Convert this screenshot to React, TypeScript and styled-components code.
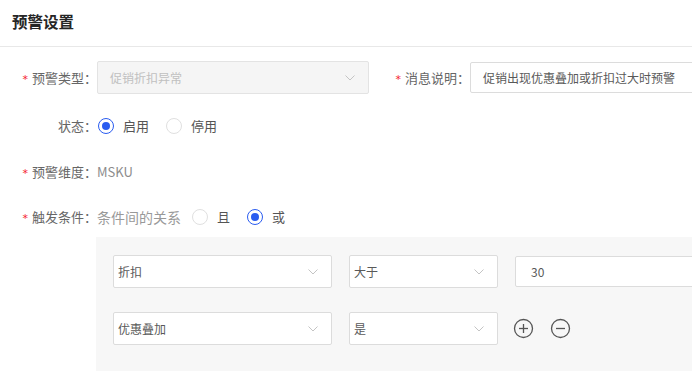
import React from 'react';
import styled, { createGlobalStyle } from 'styled-components';

const GlobalStyle = createGlobalStyle`
  html, body {
    margin: 0;
    padding: 0;
    background: #fff;
    overflow: hidden;
  }
  body {
    font-family: "Noto Sans CJK SC", "Noto Sans", sans-serif;
    color: #595959;
  }
`;

function Chevron() {
  return (
    <ChevronIcon width="12" height="8" viewBox="0 0 12 8">
      <path d="M1.5 1.5 L6 6 L10.5 1.5" fill="none" stroke="#c4c4c4" strokeWidth="1" />
    </ChevronIcon>
  );
}

function CircleIcon({ plus }: { plus?: boolean }) {
  return (
    <svg width="21" height="21" viewBox="0 0 21 21">
      <circle cx="10.5" cy="10.5" r="9" fill="none" stroke="#555" strokeWidth="1.3" />
      <path d="M6 10.5 H15" stroke="#555" strokeWidth="1.3" />
      {plus && <path d="M10.5 6 V15" stroke="#555" strokeWidth="1.3" />}
    </svg>
  );
}

function Radio({ checked, label }: { checked?: boolean; label: string }) {
  return (
    <RadioItem>
      <RadioDot $checked={checked} />
      <span>{label}</span>
    </RadioItem>
  );
}

export default function App() {
  return (
    <Page>
      <GlobalStyle />
      <Header>预警设置</Header>
      <Form>
        <Row>
          <Label $required>预警类型：</Label>
          <Select $width={272} $disabled>
            <SelectText $disabled>促销折扣异常</SelectText>
            <Chevron />
          </Select>
          <Label $required $width={101}>消息说明：</Label>
          <Input $width={240}>促销出现优惠叠加或折扣过大时预警</Input>
        </Row>
        <Row>
          <Label>状态：</Label>
          <RadioGroup>
            <Radio checked label="启用" />
            <Radio label="停用" />
          </RadioGroup>
        </Row>
        <Row>
          <Label $required>预警维度：</Label>
          <Value>MSKU</Value>
        </Row>
        <Row>
          <Label $required>触发条件：</Label>
          <Hint>条件间的关系</Hint>
          <RadioGroup>
            <Radio label="且" />
            <Radio checked label="或" />
          </RadioGroup>
        </Row>
        <ConditionBox>
          <ConditionRow>
            <Select $width={219}>
              <SelectText>折扣</SelectText>
              <Chevron />
            </Select>
            <Select $width={149}>
              <SelectText>大于</SelectText>
              <Chevron />
            </Select>
            <Input $width={200} $pad={15}>30</Input>
          </ConditionRow>
          <ConditionRow>
            <Select $width={219}>
              <SelectText>优惠叠加</SelectText>
              <Chevron />
            </Select>
            <Select $width={149}>
              <SelectText>是</SelectText>
              <Chevron />
            </Select>
            <Actions>
              <CircleIcon plus />
              <CircleIcon />
            </Actions>
          </ConditionRow>
        </ConditionBox>
      </Form>
    </Page>
  );
}

const Page = styled.div`
  width: 692px;
  height: 371px;
  overflow: hidden;
  font-size: 12px;
`;

const Header = styled.div`
  height: 47px;
  display: flex;
  align-items: center;
  padding-left: 12px;
  padding-bottom: 4px;
  box-sizing: border-box;
  font-size: 15.5px;
  font-weight: 700;
  color: #262626;
  border-bottom: 1px solid #e8e8e8;
`;

const Form = styled.div`
  padding-top: 14px;
  display: flex;
  flex-direction: column;
`;

const Row = styled.div`
  display: flex;
  align-items: center;
  height: 33px;
  margin-bottom: 13px;
  white-space: nowrap;

  &:first-child {
    margin-bottom: 15px;
  }
  &:nth-child(3) {
    margin-bottom: 12px;
  }
  &:nth-child(4) {
    margin-bottom: 4px;
  }
`;

const Label = styled.div<{ $required?: boolean; $width?: number }>`
  flex: none;
  width: ${(p) => p.$width ?? 97}px;
  text-align: right;
  font-size: 13px;
  color: #666;

  &::before {
    content: ${(p) => (p.$required ? '"*"' : 'none')};
    color: #f5222d;
    margin-right: 4px;
    font-family: "DejaVu Sans", sans-serif;
    font-size: 11px;
  }
`;

const Select = styled.div<{ $width: number; $disabled?: boolean }>`
  flex: none;
  width: ${(p) => p.$width}px;
  height: 33px;
  box-sizing: border-box;
  border: 1px solid ${(p) => (p.$disabled ? '#e3e3e3' : '#dcdcdc')};
  background: ${(p) => (p.$disabled ? '#f5f5f5' : '#fff')};
  border-radius: 2px;
  display: flex;
  align-items: center;
  justify-content: space-between;
  padding: 0 12px 0 ${(p) => (p.$disabled ? 12 : 4)}px;
`;

const SelectText = styled.span<{ $disabled?: boolean }>`
  color: ${(p) => (p.$disabled ? '#c0c0c0' : '#595959')};
`;

const ChevronIcon = styled.svg`
  flex: none;
`;

const Input = styled.div<{ $width: number; $pad?: number }>`
  flex: none;
  width: ${(p) => p.$width}px;
  height: 31px;
  box-sizing: border-box;
  border: 1px solid #dcdcdc;
  background: #fff;
  border-radius: 2px;
  display: flex;
  align-items: center;
  padding-left: ${(p) => p.$pad ?? 12}px;
  color: #595959;
`;

const RadioGroup = styled.div`
  display: flex;
  align-items: center;
  gap: 17px;
  margin-left: 1px;
`;

const RadioItem = styled.label`
  display: flex;
  align-items: center;
  gap: 9px;
  color: #555;
  font-size: 13px;
`;

const RadioDot = styled.span<{ $checked?: boolean }>`
  width: 16px;
  height: 16px;
  box-sizing: border-box;
  border-radius: 50%;
  border: 1px solid ${(p) => (p.$checked ? '#2a5cf0' : '#e0e0e0')};
  background: #fff;
  display: flex;
  align-items: center;
  justify-content: center;

  &::after {
    content: '';
    display: ${(p) => (p.$checked ? 'block' : 'none')};
    width: 8px;
    height: 8px;
    border-radius: 50%;
    background: #2a5cf0;
  }
`;

const Value = styled.span`
  color: #8c8c8c;
  font-size: 13px;
`;

const Hint = styled.span`
  color: #999;
  font-size: 14px;
  margin-right: 10px;
`;

const ConditionBox = styled.div`
  margin-left: 96px;
  background: #f7f7f7;
  padding: 18px 17px 30px;
  display: flex;
  flex-direction: column;
  gap: 24px;
`;

const ConditionRow = styled.div`
  display: flex;
  align-items: center;
  gap: 17px;
  white-space: nowrap;
`;

const Actions = styled.div`
  display: flex;
  align-items: center;
  gap: 16px;
  margin-left: -2px;
`;
